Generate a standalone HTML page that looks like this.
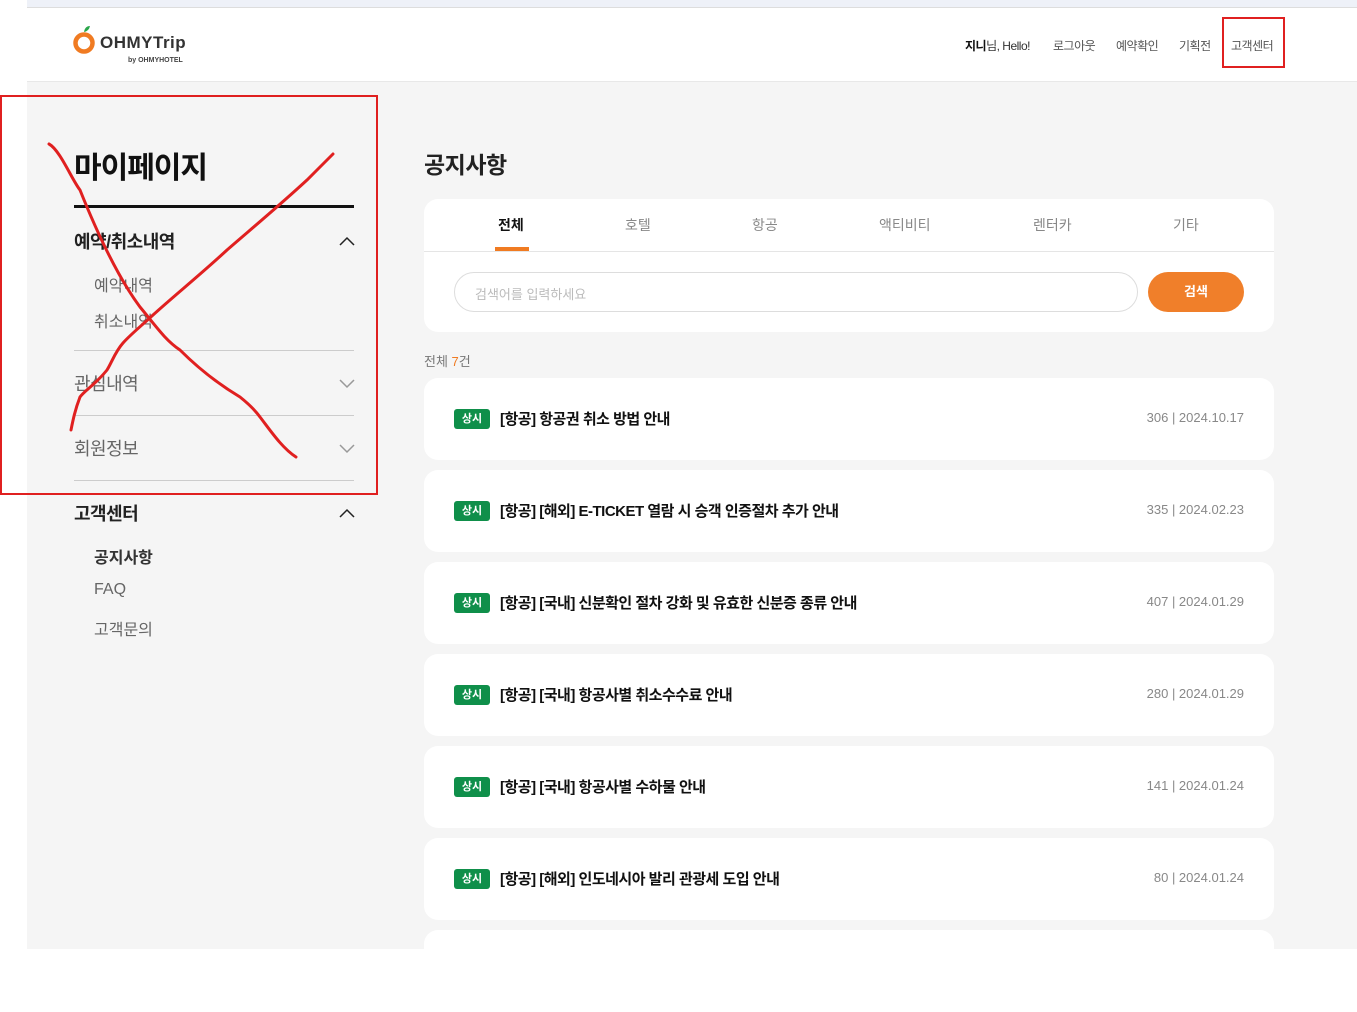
<!DOCTYPE html>
<html><head><meta charset="utf-8"><style>
*{margin:0;padding:0;box-sizing:border-box}
body{width:1357px;height:949px;overflow:hidden;background:#fff;font-family:"Liberation Sans","Noto Sans CJK KR",sans-serif;position:relative;color:#222}
.abs{position:absolute}
.top{left:27px;top:0;width:1330px;height:8px;background:#eef1f8;border-bottom:1px solid #ddd}
.header{left:27px;top:8px;width:1330px;height:74px;background:#fff;border-bottom:1px solid #e8e8e8}
.gray{left:27px;top:82px;width:1330px;height:867px;background:#f5f5f5}
.nav{top:37px;font-size:12px;color:#555;letter-spacing:-0.5px}
.sh{font-size:18px;color:#666;letter-spacing:-0.5px}
.sub{font-size:16px;color:#666;left:94px}
.hr{left:74px;width:280px;height:1px;background:#ccc}
.card{left:424px;width:850px;background:#fff;border-radius:14px}
.item{height:82px}
.badge{position:absolute;left:30px;top:31px;width:36px;height:20px;background:#0f8f4a;color:#fff;font-size:11px;font-weight:bold;border-radius:3px;text-align:center;line-height:20px}
.ttl{position:absolute;left:76px;top:30px;font-size:15px;font-weight:bold;color:#111;letter-spacing:-0.5px}
.meta{position:absolute;right:30px;top:32px;font-size:13px;color:#888}
.tab{top:215px;font-size:14px;color:#888}
</style></head><body>
<div class="abs top"></div>
<div class="abs header"></div>
<div class="abs gray"></div>
<svg class="abs" style="left:72px;top:24px" width="26" height="32" viewBox="0 0 26 32"><path d="M12 8 Q13 2 18 2 Q17 7 12 8Z" fill="#2aa64a"/><circle cx="12" cy="19" r="8.5" fill="none" stroke="#f07b22" stroke-width="4.5"/></svg>
<div class="abs" style="left:100px;top:33px;font-size:17px;font-weight:bold;color:#333;letter-spacing:0.5px">OHMYTrip</div>
<div class="abs" style="left:128px;top:57px;font-size:7px;font-weight:bold;color:#444">by OHMYHOTEL</div>
<div class="abs nav" style="left:965px;color:#333"><b style="color:#111">지니</b>님, Hello!</div>
<div class="abs nav" style="left:1053px">로그아웃</div>
<div class="abs nav" style="left:1116px">예약확인</div>
<div class="abs nav" style="left:1179px">기획전</div>
<div class="abs nav" style="left:1231px">고객센터</div>
<div class="abs" style="left:1222px;top:17px;width:63px;height:51px;border:2px solid #e02020"></div>
<div class="abs" style="left:74px;top:143px;font-size:30px;font-weight:bold;color:#111;letter-spacing:-1px">마이페이지</div>
<div class="abs" style="left:74px;top:205px;width:280px;height:3px;background:#111"></div>
<div class="abs sh" style="left:74px;top:228px;color:#222;font-weight:bold">예약/취소내역</div>
<div class="abs sub" style="top:272px">예약내역</div>
<div class="abs sub" style="top:308px">취소내역</div>
<div class="abs hr" style="top:350px"></div>
<div class="abs sh" style="left:74px;top:370px">관심내역</div>
<div class="abs hr" style="top:415px"></div>
<div class="abs sh" style="left:74px;top:435px">회원정보</div>
<div class="abs hr" style="top:480px"></div>
<div class="abs sh" style="left:74px;top:500px;color:#222;font-weight:bold">고객센터</div>
<div class="abs sub" style="top:544px;color:#333;font-weight:bold">공지사항</div>
<div class="abs sub" style="top:581px">FAQ</div>
<div class="abs sub" style="top:616px">고객문의</div>
<svg class="abs" style="left:0;top:0" width="1357" height="949">
<polyline points="340,245 347,238 354,245" fill="none" stroke="#222" stroke-width="1.5"/>
<polyline points="340,380 347,387 354,380" fill="none" stroke="#999" stroke-width="1.5"/>
<polyline points="340,445 347,452 354,445" fill="none" stroke="#999" stroke-width="1.5"/>
<polyline points="340,517 347,510 354,517" fill="none" stroke="#222" stroke-width="1.5"/>
<rect x="1" y="96" width="376" height="398" fill="none" stroke="#e02020" stroke-width="2"/>
<path d="M49,144 C60,150 72,180 80,190 C100,240 120,280 140,307 C155,325 165,340 180,350 C200,370 220,385 240,397 C250,405 255,410 260,417 C270,430 282,448 296,457" fill="none" stroke="#e02020" stroke-width="3" stroke-linecap="round"/>
<path d="M333,154 C325,162 315,172 307,180 C280,205 250,230 227,250 C200,275 175,295 153,315 C140,327 130,335 123,343 C115,352 112,362 107,370 C95,385 85,390 80,397 C75,410 73,420 71,430" fill="none" stroke="#e02020" stroke-width="3" stroke-linecap="round"/>
</svg>
<div class="abs" style="left:424px;top:146px;font-size:23px;font-weight:bold;color:#222;letter-spacing:-0.5px">공지사항</div>
<div class="abs card" style="top:199px;height:133px"></div>
<div class="abs" style="left:424px;top:251px;width:850px;height:1px;background:#e5e5e5"></div>
<div class="abs tab" style="left:498px;color:#111;font-weight:bold">전체</div>
<div class="abs" style="left:495px;top:247px;width:34px;height:4px;background:#f07b22"></div>
<div class="abs tab" style="left:625px">호텔</div>
<div class="abs tab" style="left:752px">항공</div>
<div class="abs tab" style="left:879px">액티비티</div>
<div class="abs tab" style="left:1033px">렌터카</div>
<div class="abs tab" style="left:1173px">기타</div>
<div class="abs" style="left:454px;top:272px;width:684px;height:40px;border:1px solid #ddd;border-radius:20px;font-size:13px;color:#bbb;padding:11px 20px">검색어를 입력하세요</div>
<div class="abs" style="left:1148px;top:272px;width:96px;height:40px;background:#f07f2a;border-radius:20px;color:#fff;font-size:13px;font-weight:bold;text-align:center;line-height:40px">검색</div>
<div class="abs" style="left:424px;top:351px;font-size:13px;color:#777">전체 <span style="color:#f07b22">7</span>건</div>
<div class="abs card item" style="top:378px"><div class="badge">상시</div><div class="ttl">[항공] 항공권 취소 방법 안내</div><div class="meta">306 | 2024.10.17</div></div>
<div class="abs card item" style="top:470px"><div class="badge">상시</div><div class="ttl">[항공] [해외] E-TICKET 열람 시 승객 인증절차 추가 안내</div><div class="meta">335 | 2024.02.23</div></div>
<div class="abs card item" style="top:562px"><div class="badge">상시</div><div class="ttl">[항공] [국내] 신분확인 절차 강화 및 유효한 신분증 종류 안내</div><div class="meta">407 | 2024.01.29</div></div>
<div class="abs card item" style="top:654px"><div class="badge">상시</div><div class="ttl">[항공] [국내] 항공사별 취소수수료 안내</div><div class="meta">280 | 2024.01.29</div></div>
<div class="abs card item" style="top:746px"><div class="badge">상시</div><div class="ttl">[항공] [국내] 항공사별 수하물 안내</div><div class="meta">141 | 2024.01.24</div></div>
<div class="abs card item" style="top:838px"><div class="badge">상시</div><div class="ttl">[항공] [해외] 인도네시아 발리 관광세 도입 안내</div><div class="meta">80 | 2024.01.24</div></div>
<div class="abs card item" style="top:930px"></div>
</body></html>
